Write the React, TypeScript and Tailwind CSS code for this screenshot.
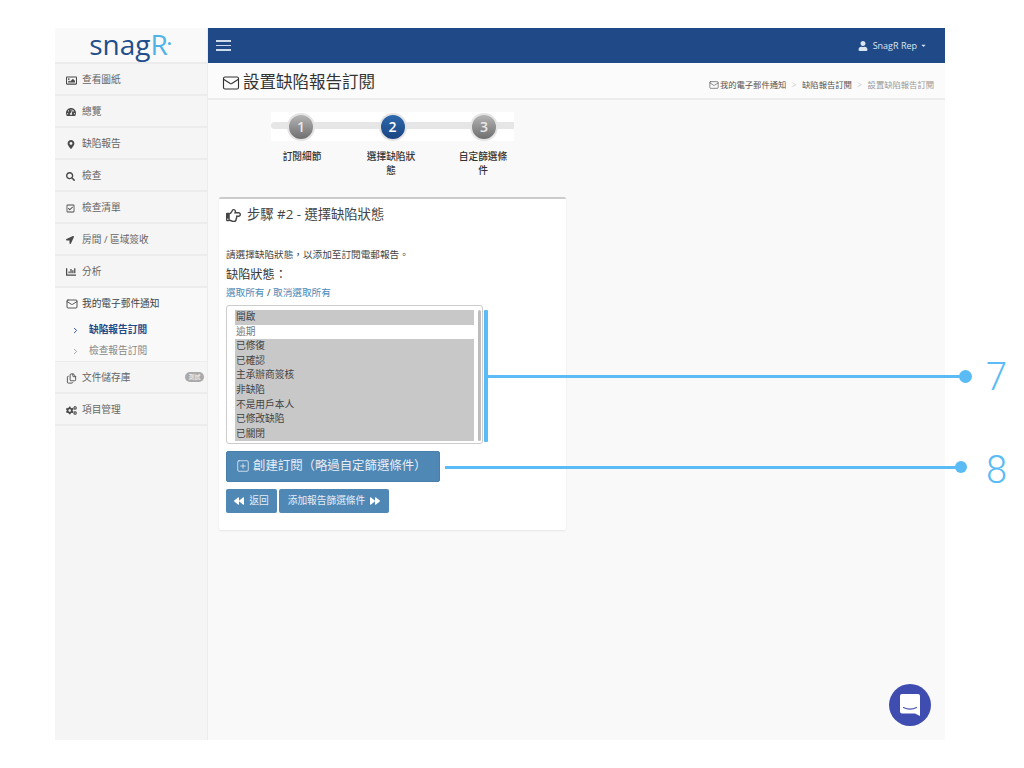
import { FaBackward, FaCogs, FaForward, FaMapMarkerAlt, FaRegCheckSquare, FaRegHandPointRight, FaRegImage, FaLocationArrow, FaSearch, FaTachometerAlt, FaUser, FaCaretDown, FaChartBar } from "react-icons/fa";
import { Mail, ChevronRight, SquarePlus, Files } from "lucide-react";

const font = { fontFamily: '"Open Sans", "Noto Sans CJK TC", sans-serif' };

const menuTop = [
  { label: "查看圖紙", icon: <FaRegImage className="w-[11px] h-[11px]" /> },
  { label: "總覽", icon: <FaTachometerAlt className="w-[10px] h-[10px]" /> },
  { label: "缺陷報告", icon: <FaMapMarkerAlt className="ml-[1px] w-[8px] h-[9px]" /> },
  { label: "檢查", icon: <FaSearch className="w-[9px] h-[9px]" /> },
  { label: "檢查清單", icon: <FaRegCheckSquare className="w-[9px] h-[9px]" /> },
  { label: "房間 / 區域簽收", icon: <FaLocationArrow className="w-[8px] h-[8px]" /> },
  { label: "分析", icon: <FaChartBar className="w-[10px] h-[10px]" /> },
];

const statuses = [
  { label: "開啟", on: true },
  { label: "逾期", on: false },
  { label: "已修復", on: true },
  { label: "已確認", on: true },
  { label: "主承辦商簽核", on: true },
  { label: "非缺陷", on: true },
  { label: "不是用戶本人", on: true },
  { label: "已修改缺陷", on: true },
  { label: "已關閉", on: true },
];

const steps = [
  { n: "1", label: "訂閱細節", active: false, labelClass: "w-[52px] text-center" },
  { n: "2", label: "選擇缺陷狀態", active: true, labelClass: "w-[52px] text-center" },
  { n: "3", label: "自定篩選條件", active: false, labelClass: "w-[52px] text-center ml-[3px]" },
];

const MenuRow = ({ icon, label, badge }: { icon: React.ReactNode; label: string; badge?: string }) => (
  <div className="h-[32px] pt-[2px] flex items-center border-b-2 border-[#ececec] text-[9.7px] text-[#666]">
    <span className="w-[27px] pl-[11px] flex justify-start text-[#4a4a4a]">{icon}</span>
    <span>{label}</span>
    {badge && (
      <span className="ml-auto mr-[3px] mb-[3px] w-[19px] h-[10px] rounded-full bg-[#aaa] text-white text-[6px] leading-[10px] text-center">
        {badge}
      </span>
    )}
  </div>
);

const Sidebar = () => (
  <div className="w-[153px] shrink-0 bg-[#f5f5f5] border-r border-[#ececec]">
    <div className="h-[36px] bg-[#f9f9f9] border-b-2 border-[#ececec] flex items-center justify-center pr-[2px]">
      <span className="text-[28px] leading-none font-medium text-[#1f4f8c] pb-[3px]" style={{ fontFamily: '"Open Sans", sans-serif' }}>
        snag<span className="text-[#4fb3e8]">R</span>
      </span>
      <span className="w-[3px] h-[3px] rounded-full bg-[#4fb3e8] mb-[3px]" />
    </div>
    {menuTop.map((m) => (
      <MenuRow key={m.label} icon={m.icon} label={m.label} />
    ))}
    <div className="h-[74px] bg-[#f9f9f9] border-b border-[#ececec] text-[9.7px]">
      <div className="h-[32px] flex items-center text-[#444]">
        <span className="w-[27px] pl-[11px]">
          <Mail className="w-[12px] h-[12px]" strokeWidth={1.8} />
        </span>
        <span>我的電子郵件通知</span>
      </div>
      <div className="h-[21px] flex items-center font-bold text-[#1f4a87]">
        <ChevronRight className="ml-[16px] w-[9px] h-[9px]" strokeWidth={2.5} />
        <span className="ml-[9px]">缺陷報告訂閱</span>
      </div>
      <div className="h-[20px] flex items-center text-[#888]">
        <ChevronRight className="ml-[16px] w-[9px] h-[9px]" strokeWidth={2} />
        <span className="ml-[9px]">檢查報告訂閱</span>
      </div>
    </div>
    <MenuRow icon={<Files className="w-[11px] h-[11px]" />} label="文件儲存庫" badge="測試" />
    <MenuRow icon={<FaCogs className="w-[11px] h-[11px]" />} label="項目管理" />
  </div>
);

const TopBar = () => (
  <div className="h-[35px] bg-[#1f4a87] flex items-center justify-between pl-[8px] pr-[18px]">
    <div className="flex flex-col gap-[3px] w-[15px]">
      <span className="h-[1.5px] bg-[#cfdbe9]" />
      <span className="h-[1.5px] bg-[#cfdbe9]" />
      <span className="h-[1.5px] bg-[#cfdbe9]" />
    </div>
    <div className="flex items-center text-[9px] text-[#dbe5f0]">
      <FaUser className="w-[10px] h-[10px] mr-[5px]" />
      <span>SnagR Rep</span>
      <FaCaretDown className="w-[7px] h-[7px] ml-[3px]" />
    </div>
  </div>
);

const PageHeader = () => (
  <div className="h-[37px] bg-[#fbfbfb] border-b-2 border-[#ececec] flex items-center justify-between pl-[14px] pr-[11px]">
    <div className="flex items-center text-[16.5px] text-[#333] pt-[4px]">
      <Mail className="w-[18px] h-[18px] mr-[3px]" strokeWidth={1.5} />
      <span>設置缺陷報告訂閱</span>
    </div>
    <div className="flex items-center text-[8.3px] text-[#555] mt-[9px]">
      <Mail className="w-[10px] h-[10px] mr-[1px]" strokeWidth={1.6} />
      <span>我的電子郵件通知</span>
      <span className="mx-[5.5px] text-[#ccc]">&gt;</span>
      <span>缺陷報告訂閱</span>
      <span className="mx-[5.5px] text-[#ccc]">&gt;</span>
      <span className="text-[#999]">設置缺陷報告訂閱</span>
    </div>
  </div>
);

const Stepper = () => (
  <div className="ml-[63px] w-[243px]">
    <div className="relative h-[29px] bg-white flex items-center justify-between pl-[16px] pr-[16px]">
      <div className="absolute left-0 right-0 top-[10px] h-[7px] bg-[#e6e6e6] rounded-l-full" />
      {steps.map((s) => (
        <div
          key={s.n}
          className={
            s.active
              ? "relative w-[28px] h-[28px] rounded-full border-2 border-[#e4e4e4] bg-gradient-to-b from-[#2d69ad] to-[#1b4581] flex items-center justify-center text-white text-[14px] font-semibold"
              : "relative w-[28px] h-[28px] rounded-full border-2 border-[#e4e4e4] bg-gradient-to-b from-[#b5b5b5] to-[#6f6f6f] flex items-center justify-center text-[#e8e8e8] text-[14px] font-semibold"
          }
        >
          {s.n}
        </div>
      ))}
    </div>
    <div className="mt-[9px] flex gap-[37px] pl-[5px] text-[9.7px] leading-[14px] text-[#333] font-medium">
      {steps.map((s) => (
        <div key={s.n} className={s.labelClass}>
          {s.label}
        </div>
      ))}
    </div>
  </div>
);

const StatusList = () => (
  <div className="w-[257px] h-[139px] rounded-[3px] border border-[#ccc] bg-white pt-[4px] pl-[8px] flex">
    <div className="w-[239px] shrink-0 text-[9.7px] leading-[14.6px] text-[#444]">
      {statuses.map((s) => (
        <div key={s.label} className={s.on ? "bg-[#c8c8c8] pl-[1px]" : "text-[#777] pl-[1px]"}>
          {s.label}
        </div>
      ))}
    </div>
    <div className="ml-[4px] w-[3px] h-[131px] bg-[#bdbdbd] rounded-full shrink-0" />
  </div>
);

const Panel = () => (
  <div className="mt-[19px] ml-[11px] w-[347px] h-[333px] bg-white border-t-2 border-[#ccc] rounded-[2px] shadow-[0_1px_2px_rgba(0,0,0,0.08)] pl-[7px]">
    <div className="mt-[7px] h-[18px] flex items-center text-[13.3px] text-[#444]">
      <FaRegHandPointRight className="w-[15px] h-[15px] mr-[6px]" />
      <span>步驟 #2 - 選擇缺陷狀態</span>
    </div>
    <div className="mt-[24px] text-[9.65px] leading-[14px] text-[#444]">請選擇缺陷狀態，以添加至訂閱電郵報告。</div>
    <div className="mt-[4px] text-[12.2px] leading-[18px] text-[#333]">缺陷狀態：</div>
    <div className="mt-[2px] text-[9.65px] leading-[14px] text-[#444]">
      <span className="text-[#4a8ab8]">選取所有</span> / <span className="text-[#4a8ab8]">取消選取所有</span>
    </div>
    <div className="mt-[5px]">
      <StatusList />
    </div>
    <div className="mt-[7px] w-[214px] h-[31px] rounded-[2px] bg-[#4f87b5] border border-[#4a7fac] flex items-center text-[12.4px] text-[#e6eef5] pl-[9px]">
      <SquarePlus className="w-[14px] h-[14px] mr-[3px] mb-[1px]" strokeWidth={1.4} />
      <span>創建訂閱（略過自定篩選條件）</span>
    </div>
    <div className="mt-[7px] flex gap-[2px]">
      <div className="w-[51px] h-[24px] rounded-[2px] bg-[#4f87b5] flex items-center justify-center text-[9.7px] text-[#e6eef5]">
        <FaBackward className="w-[10px] h-[10px] mr-[5px] text-white" />
        返回
      </div>
      <div className="w-[110px] h-[24px] rounded-[2px] bg-[#4f87b5] flex items-center justify-center text-[9.7px] text-[#e6eef5]">
        添加報告篩選條件
        <FaForward className="w-[10px] h-[10px] ml-[5px] text-white" />
      </div>
    </div>
  </div>
);

// callout lines and the chat bubble sit over the page
const Overlays = () => (
  <>
    <div className="absolute left-[484px] top-[310px] w-[4px] h-[132px] bg-[#5bbcf5] rounded-[1px]" />
    <div className="absolute left-[488px] top-[375px] w-[477px] h-[3px] bg-[#5bbcf5]" />
    <div className="absolute left-[959px] top-[370px] w-[13px] h-[13px] rounded-full bg-[#5bbcf5]" />
    <div className="absolute left-[986px] top-[355px] text-[38px] leading-[44px] font-light text-[#5bbcf5]" style={{ fontFamily: 'Roboto, sans-serif' }}>7</div>
    <div className="absolute left-[445px] top-[466px] w-[516px] h-[3px] bg-[#5bbcf5]" />
    <div className="absolute left-[955px] top-[461px] w-[12px] h-[12px] rounded-full bg-[#5bbcf5]" />
    <div className="absolute left-[986px] top-[448px] text-[38px] leading-[44px] font-light text-[#5bbcf5]" style={{ fontFamily: 'Roboto, sans-serif' }}>8</div>
    <div className="absolute left-[889px] top-[684px] w-[42px] h-[42px] rounded-full bg-[#3f4db0] flex items-center justify-center">
      <svg viewBox="0 0 20 22" className="w-[20px] h-[22px]">
        <path d="M2 0h16a2 2 0 0 1 2 2v20l-5-2.5H2a2 2 0 0 1-2-2V2a2 2 0 0 1 2-2z" fill="#fff" />
        <path d="M3.5 13.5c4 2 9 2 13 0" fill="none" stroke="#3f4db0" strokeWidth="1.1" strokeLinecap="round" />
      </svg>
    </div>
  </>
);

export default function App() {
  return (
    <div className="relative w-[1024px] h-[768px] bg-white overflow-hidden" style={font}>
      <div className="absolute left-[55px] top-[28px] w-[890px] h-[712px] flex bg-[#f9f9f9]">
        <Sidebar />
        <div className="flex-1">
          <TopBar />
          <PageHeader />
          <div className="pt-[12px]">
            <Stepper />
            <Panel />
          </div>
        </div>
      </div>
      <Overlays />
    </div>
  );
}
